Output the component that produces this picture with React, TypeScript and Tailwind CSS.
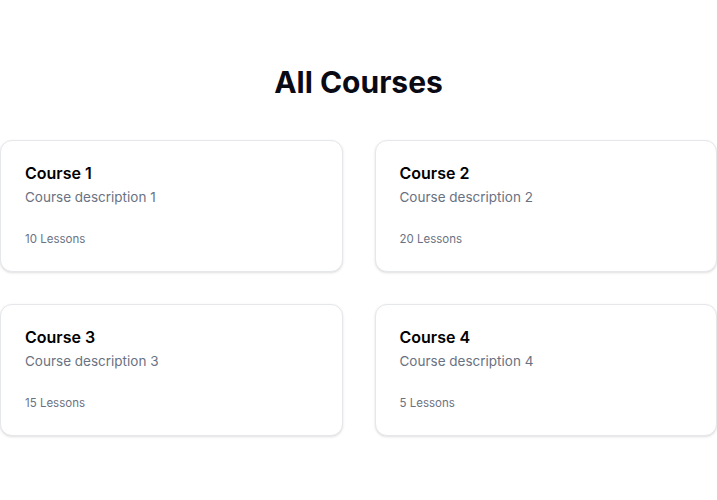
import React from "react";

const courses = [
  { id: 1, title: "Course 1", description: "Course description 1", lessons: 10 },
  { id: 2, title: "Course 2", description: "Course description 2", lessons: 20 },
  { id: 3, title: "Course 3", description: "Course description 3", lessons: 15 },
  { id: 4, title: "Course 4", description: "Course description 4", lessons: 5 },
];

export default function App() {
  return (
    <div className="min-h-screen bg-white pt-16 font-['Inter',sans-serif]">
      <h1 className="text-center text-3xl font-bold text-[#0a0a14] mb-10">All Courses</h1>
      <div className="grid grid-cols-2 gap-8">
        {courses.map((course) => (
          <div
            key={course.id}
            className="flex flex-col rounded-xl border border-gray-200 bg-white px-6 pt-5 pb-6 shadow-sm"
          >
            <h2 className="text-base font-semibold text-black">{course.title}</h2>
            <p className="mt-0.5 text-[13.5px] leading-5 text-gray-500">{course.description}</p>
            <p className="mt-6 text-[11.5px] leading-4 text-gray-500">{course.lessons} Lessons</p>
          </div>
        ))}
      </div>
    </div>
  );
}
